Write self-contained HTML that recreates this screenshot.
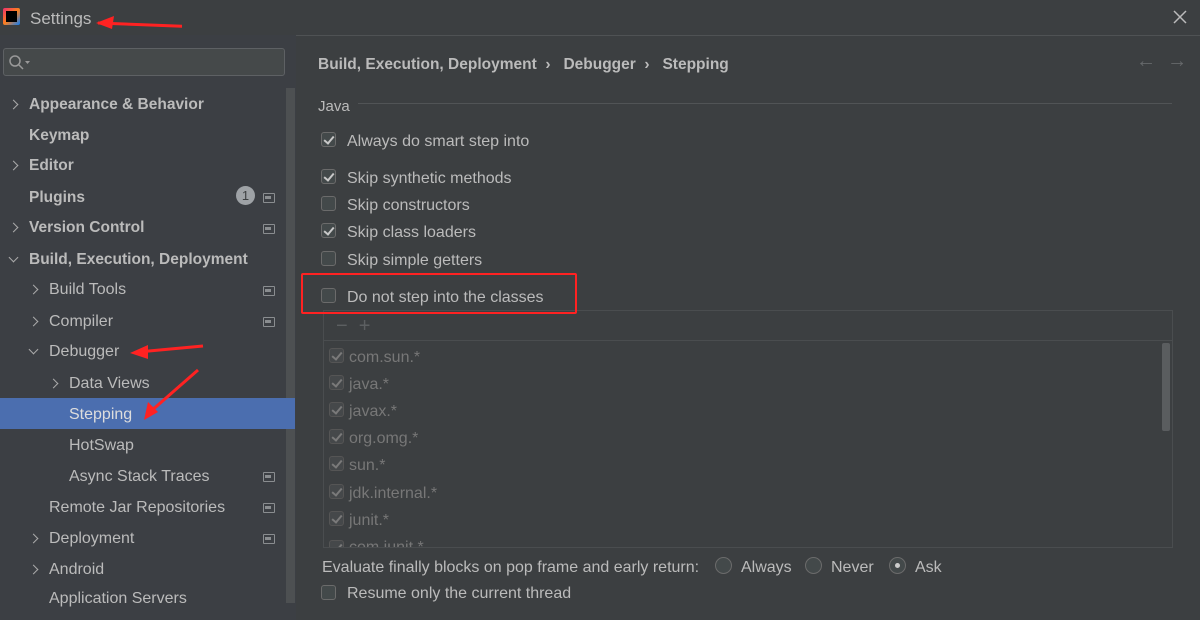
<!DOCTYPE html><html><head><style>
body{margin:0;width:1200px;height:620px;overflow:hidden;background:#3c3f41;font-family:"Liberation Sans",sans-serif;color:#bbbbbb;position:relative}
.a{position:absolute;white-space:nowrap}
.side{position:absolute;left:0;top:35px;width:296px;height:585px;background:#3c3f44}
.t{font-size:16px;line-height:20px;margin-top:2px}
.b{font-weight:bold;font-size:15.5px}
.cb{position:absolute;width:15px;height:15px;border:1px solid #6b6b6b;border-radius:3px;background:#43494a;box-sizing:border-box}
.cb.c::after{content:"";position:absolute;left:4px;top:1px;width:4px;height:8px;border:solid #c8c8c8;border-width:0 2px 2px 0;transform:rotate(40deg)}
.li .cb{border-color:#555;background:#45484a}
.li .cb.c::after{border-color:#7a7a7a}
.chev{position:absolute;width:6px;height:6px;border:solid #aaa;border-width:0 1.5px 1.5px 0;margin-top:2px}
.ic{position:absolute;left:263px;width:10px;height:8px;border:1.5px solid #8a8d90;border-radius:1px;margin-top:2px}
.ic::after{content:"";position:absolute;left:1px;top:2px;width:6px;height:3px;background:#8a8d90}
.rd{position:absolute;width:17px;height:17px;border:1px solid #6b6b6b;border-radius:50%;background:#43494a;box-sizing:border-box}
</style></head><body>
<div class="a" style="left:0;top:35px;width:1200px;height:1px;background:#4f5254"></div>
<div class="a" style="left:3px;top:8px;width:17px;height:17px;background:linear-gradient(135deg,#f0306e,#fc801d 50%,#087cfa);border-radius:2px"><div style="position:absolute;left:3px;top:3px;width:11px;height:11px;background:#000"></div></div>
<div class="a" style="left:30px;top:9px;font-size:17px;color:#bbb">Settings</div>
<svg class="a" style="left:96px;top:14px" width="86" height="20"><path d="M2 9 L180 16" stroke="#f22" stroke-width="3"/><path d="M0 9 L18 2 L16 15 Z" fill="#f22"/></svg>
<svg class="a" style="left:1173px;top:10px" width="14" height="14"><path d="M1 1L13 13M13 1L1 13" stroke="#bbb" stroke-width="1.5"/></svg>
<div class="side"></div>
<div class="a" style="left:3px;top:48px;width:282px;height:28px;border:1px solid #5e6164;border-radius:3px;background:#45494a;box-sizing:border-box"></div>
<svg class="a" style="left:8px;top:54px" width="24" height="18"><circle cx="7" cy="7" r="5" stroke="#999" stroke-width="1.5" fill="none"/><path d="M11 11 L15 15" stroke="#999" stroke-width="1.5"/><path d="M17 7 L22 7 L19.5 10 Z" fill="#999"/></svg>
<div class="a" style="left:286px;top:88px;width:9px;height:515px;background:#4d5052"></div>
<div class="a" style="left:0;top:398px;width:295px;height:31px;background:#4b6eaf"></div>
<div class="chev" style="left:10px;top:99px;transform:rotate(-45deg)"></div>
<div class="a t b" style="left:29px;top:93px">Appearance &amp; Behavior</div>
<div class="a t b" style="left:29px;top:124px">Keymap</div>
<div class="chev" style="left:10px;top:160px;transform:rotate(-45deg)"></div>
<div class="a t b" style="left:29px;top:154px">Editor</div>
<div class="a t b" style="left:29px;top:186px">Plugins</div>
<div class="a" style="left:236px;top:186px;width:19px;height:19px;border-radius:50%;background:#9ea2a6;color:#3c3f41;font-size:13px;text-align:center;line-height:19px">1</div>
<div class="ic" style="top:191px"></div>
<div class="chev" style="left:10px;top:222px;transform:rotate(-45deg)"></div>
<div class="a t b" style="left:29px;top:216px">Version Control</div>
<div class="ic" style="top:222px"></div>
<div class="chev" style="left:10px;top:252px;transform:rotate(45deg)"></div>
<div class="a t b" style="left:29px;top:248px">Build, Execution, Deployment</div>
<div class="chev" style="left:30px;top:284px;transform:rotate(-45deg)"></div>
<div class="a t" style="left:49px;top:278px">Build Tools</div><div class="ic" style="top:284px"></div>
<div class="chev" style="left:30px;top:316px;transform:rotate(-45deg)"></div>
<div class="a t" style="left:49px;top:310px">Compiler</div><div class="ic" style="top:315px"></div>
<div class="chev" style="left:30px;top:344px;transform:rotate(45deg)"></div>
<div class="a t" style="left:49px;top:340px">Debugger</div>
<div class="chev" style="left:50px;top:378px;transform:rotate(-45deg)"></div>
<div class="a t" style="left:69px;top:372px">Data Views</div>
<div class="a t" style="left:69px;top:403px;color:#ddd">Stepping</div>
<div class="a t" style="left:69px;top:434px">HotSwap</div>
<div class="a t" style="left:69px;top:465px">Async Stack Traces</div><div class="ic" style="top:470px"></div>
<div class="a t" style="left:49px;top:496px">Remote Jar Repositories</div><div class="ic" style="top:501px"></div>
<div class="chev" style="left:30px;top:533px;transform:rotate(-45deg)"></div>
<div class="a t" style="left:49px;top:527px">Deployment</div><div class="ic" style="top:532px"></div>
<div class="chev" style="left:30px;top:564px;transform:rotate(-45deg)"></div>
<div class="a t" style="left:49px;top:558px">Android</div>
<div class="a t" style="left:49px;top:587px">Application Servers</div>
<svg class="a" style="left:128px;top:340px" width="80" height="90"><path d="M10 12 L75 6" stroke="#f22" stroke-width="3"/><path d="M2 13 L20 5 L20 19 Z" fill="#f22"/><path d="M70 30 L22 72" stroke="#f22" stroke-width="3"/><path d="M16 80 L20 62 L30 72 Z" fill="#f22"/></svg>
<div class="a t b" style="left:318px;top:53px;font-size:15.5px">Build, Execution, Deployment &nbsp;›&nbsp;&nbsp; Debugger &nbsp;›&nbsp;&nbsp; Stepping</div>
<div class="a" style="left:1136px;top:50px;font-size:20px;color:#66696b">←&nbsp;&nbsp;→</div>
<div class="a t" style="left:318px;top:95px;font-size:15px">Java</div>
<div class="a" style="left:358px;top:103px;width:814px;height:1px;background:#515456"></div>
<div class="cb c" style="left:321px;top:132px"></div><div class="a t" style="left:347px;top:130px">Always do smart step into</div>
<div class="cb c" style="left:321px;top:169px"></div><div class="a t" style="left:347px;top:167px">Skip synthetic methods</div>
<div class="cb" style="left:321px;top:196px"></div><div class="a t" style="left:347px;top:194px">Skip constructors</div>
<div class="cb c" style="left:321px;top:223px"></div><div class="a t" style="left:347px;top:221px">Skip class loaders</div>
<div class="cb" style="left:321px;top:251px"></div><div class="a t" style="left:347px;top:249px">Skip simple getters</div>
<div class="a" style="left:323px;top:310px;width:850px;height:238px;border:1px solid #4a4d4f;box-sizing:border-box;overflow:hidden"><div class="li">
<div class="cb c" style="left:5px;top:229px"></div><div class="a t" style="left:25px;top:225px;color:#777">com.junit.*</div></div></div>
<div class="a" style="left:324px;top:340px;width:848px;height:1px;background:#4a4d4f"></div>
<div class="a" style="left:336px;top:315px;font-size:20px;color:#5c5f61">−&nbsp;&nbsp;+</div>
<div class="a" style="left:1162px;top:343px;width:8px;height:88px;background:#5a5d5f;border-radius:2px"></div>
<div class="cb" style="left:321px;top:288px"></div><div class="a t" style="left:347px;top:286px">Do not step into the classes</div>
<div class="a" style="left:301px;top:273px;width:276px;height:41px;border:2.5px solid #f22;box-sizing:border-box;border-radius:2px"></div>
<div class="li">
<div class="cb c" style="left:329px;top:348px"></div><div class="a t" style="left:349px;top:346px;color:#777">com.sun.*</div>
<div class="cb c" style="left:329px;top:375px"></div><div class="a t" style="left:349px;top:373px;color:#777">java.*</div>
<div class="cb c" style="left:329px;top:402px"></div><div class="a t" style="left:349px;top:400px;color:#777">javax.*</div>
<div class="cb c" style="left:329px;top:429px"></div><div class="a t" style="left:349px;top:427px;color:#777">org.omg.*</div>
<div class="cb c" style="left:329px;top:456px"></div><div class="a t" style="left:349px;top:454px;color:#777">sun.*</div>
<div class="cb c" style="left:329px;top:484px"></div><div class="a t" style="left:349px;top:482px;color:#777">jdk.internal.*</div>
<div class="cb c" style="left:329px;top:511px"></div><div class="a t" style="left:349px;top:509px;color:#777">junit.*</div>
</div>
<div class="a t" style="left:322px;top:556px">Evaluate finally blocks on pop frame and early return:</div>
<div class="rd" style="left:715px;top:557px"></div><div class="a t" style="left:741px;top:556px">Always</div>
<div class="rd" style="left:805px;top:557px"></div><div class="a t" style="left:831px;top:556px">Never</div>
<div class="rd" style="left:889px;top:557px"><div style="position:absolute;left:5px;top:5px;width:5px;height:5px;border-radius:50%;background:#ccc"></div></div><div class="a t" style="left:915px;top:556px">Ask</div>
<div class="cb" style="left:321px;top:585px"></div><div class="a t" style="left:347px;top:582px">Resume only the current thread</div>
</body></html>
